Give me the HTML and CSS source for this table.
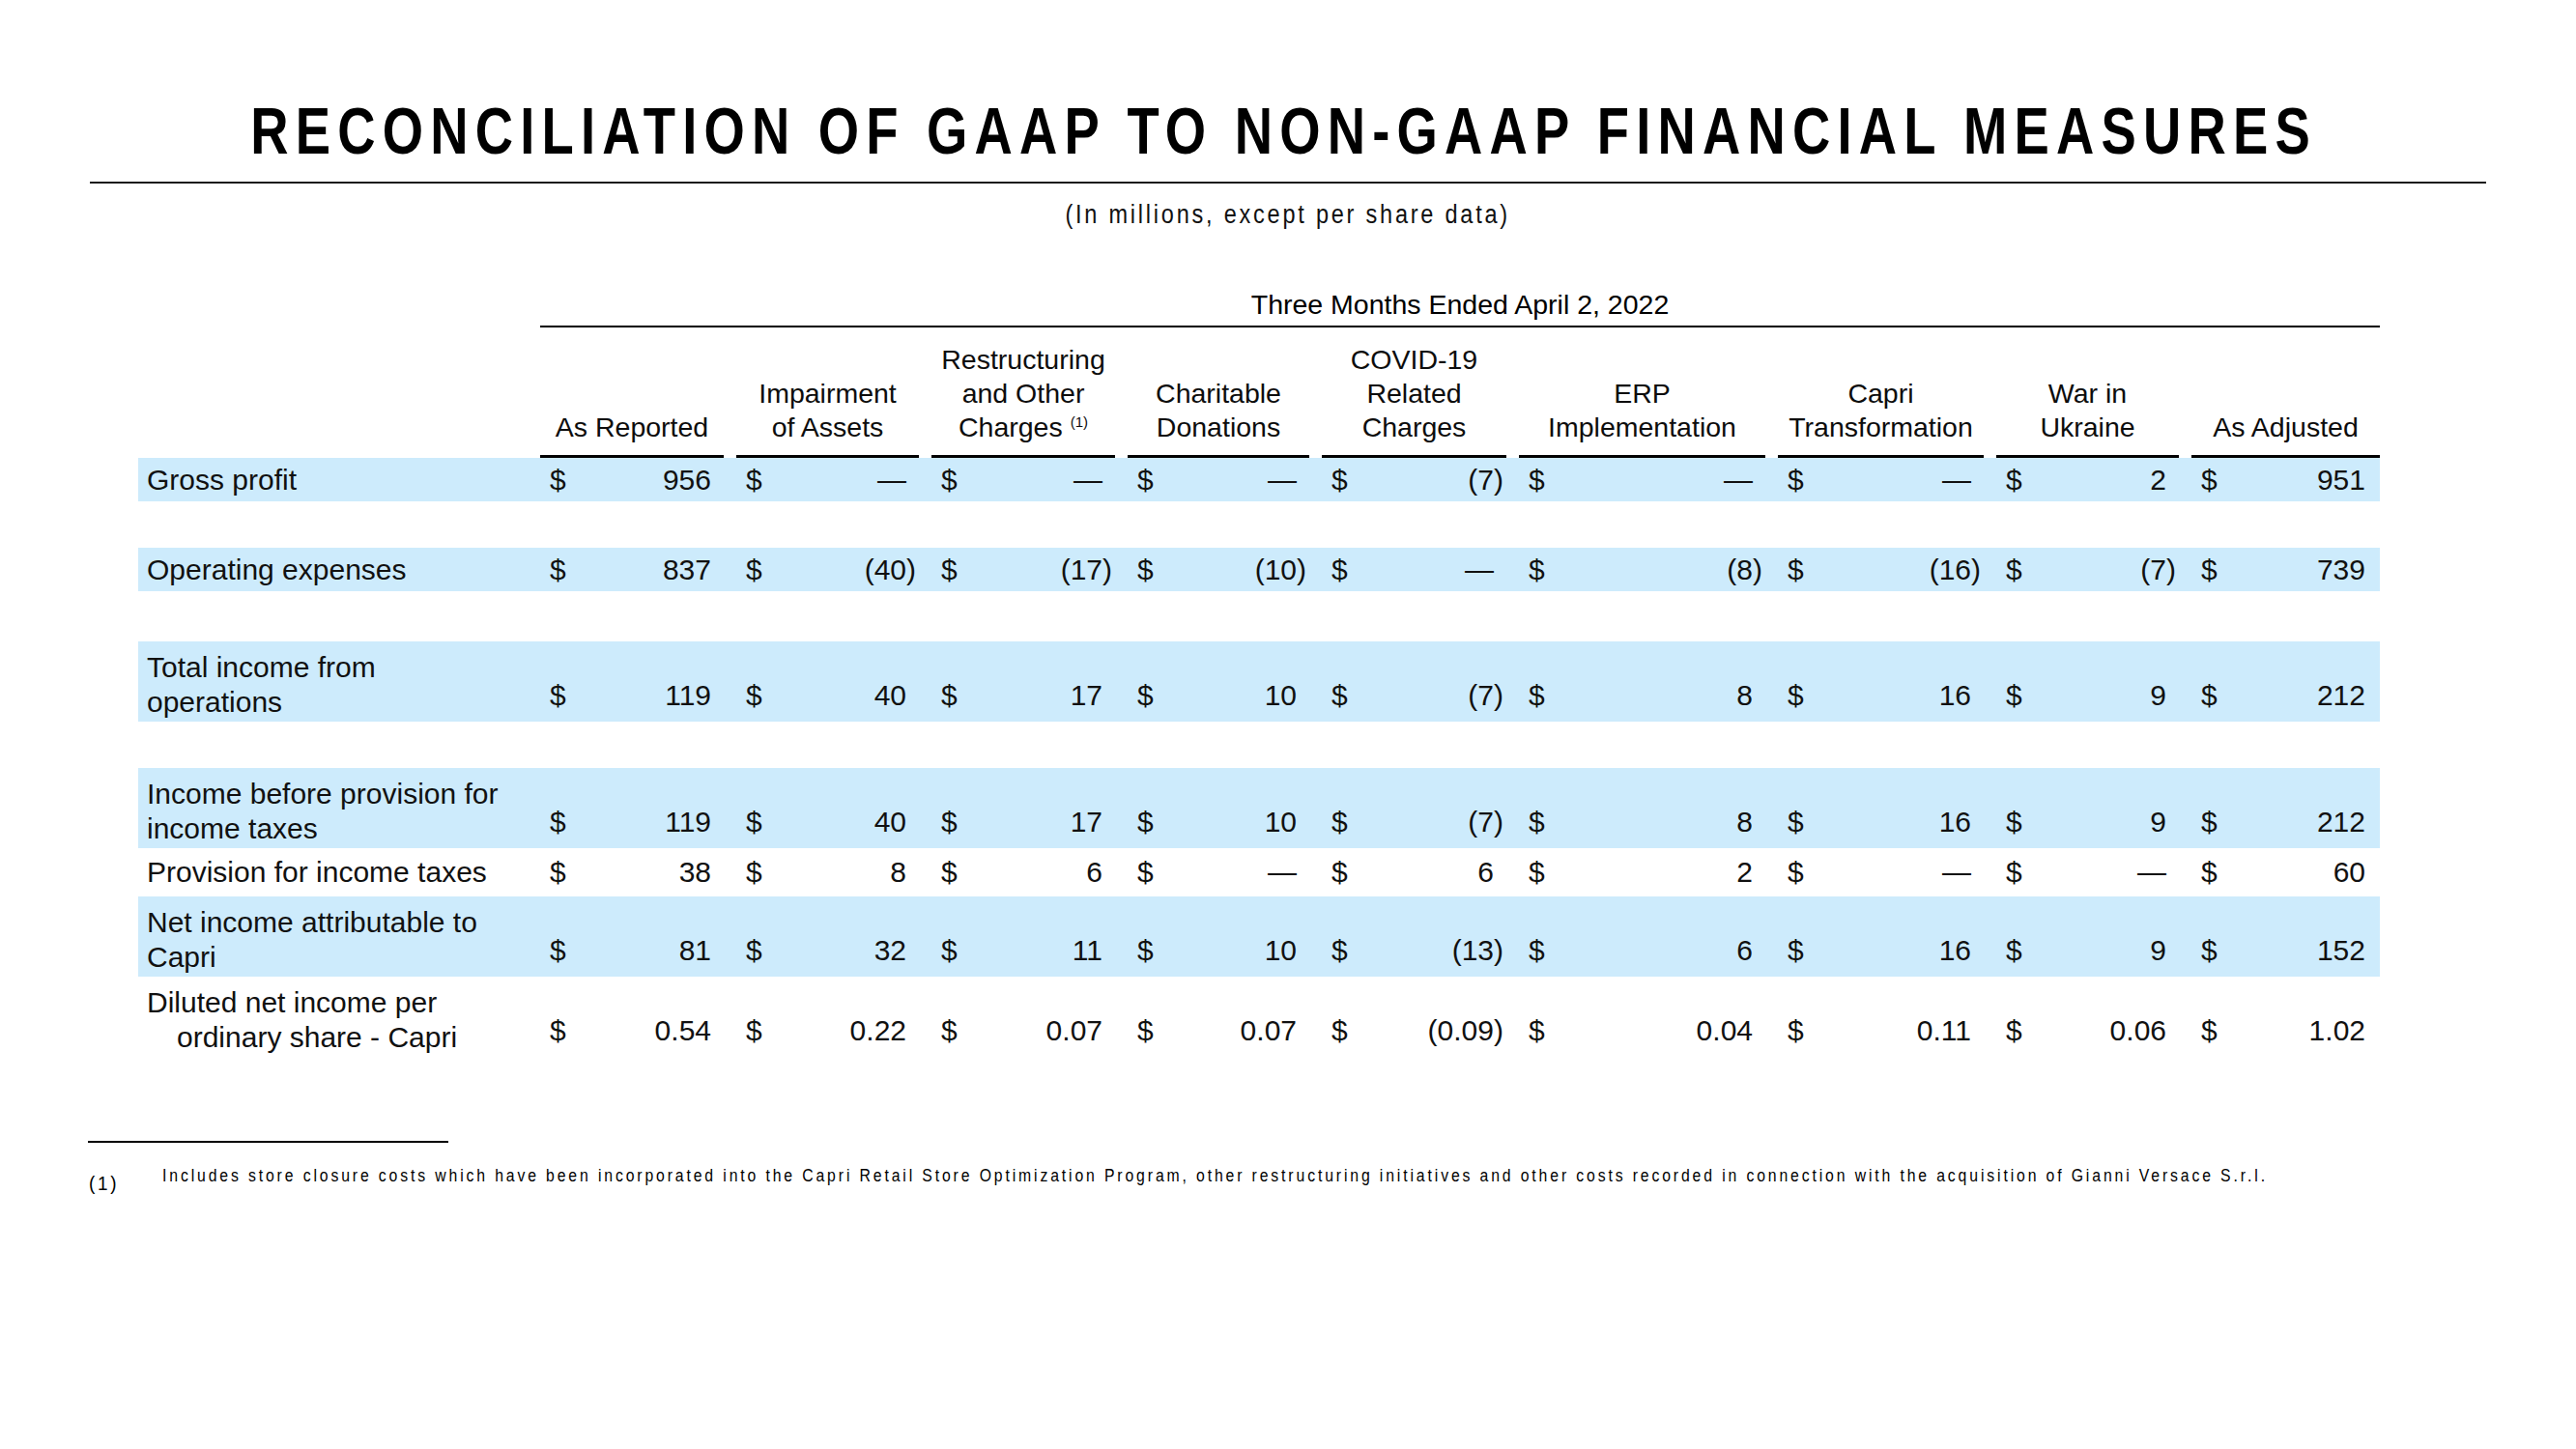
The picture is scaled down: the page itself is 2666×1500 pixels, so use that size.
FILE: index.html
```html
<!DOCTYPE html>
<html lang="en">
<head>
<meta charset="utf-8">
<title>Reconciliation of GAAP to Non-GAAP Financial Measures</title>
<link rel="stylesheet" href="styles.css">
</head>
<body>
<main class="slide">
  <h1 class="title"><span class="condensed title-text">RECONCILIATION OF GAAP TO NON-GAAP FINANCIAL MEASURES</span></h1>
  <hr class="title-rule">
  <p class="subtitle"><span class="condensed subtitle-text">(In millions, except per share data)</span></p>

  <section class="table">
    <div class="row period-row">
      <div></div>
      <div class="period">Three Months Ended April 2, 2022</div>
    </div>
    <div class="row head-row">
      <div></div>
      <div class="head">As Reported</div>
      <div class="head">Impairment<br>of Assets</div>
      <div class="head">Restructuring<br>and Other<br>Charges <sup class="sup">(1)</sup></div>
      <div class="head">Charitable<br>Donations</div>
      <div class="head">COVID-19<br>Related<br>Charges</div>
      <div class="head">ERP<br>Implementation</div>
      <div class="head">Capri<br>Transformation</div>
      <div class="head">War in<br>Ukraine</div>
      <div class="head">As Adjusted</div>
    </div>

    <div class="row band single gross">
      <div class="label">Gross profit</div>
      <div class="val"><span>$</span><span class="num">956</span></div>
      <div class="val"><span>$</span><span class="num">—</span></div>
      <div class="val"><span>$</span><span class="num">—</span></div>
      <div class="val"><span>$</span><span class="num">—</span></div>
      <div class="val"><span>$</span><span class="num">(7<span class="cp">)</span></span></div>
      <div class="val"><span>$</span><span class="num">—</span></div>
      <div class="val"><span>$</span><span class="num">—</span></div>
      <div class="val"><span>$</span><span class="num">2</span></div>
      <div class="val last"><span>$</span><span class="num">951</span></div>
    </div>

    <div class="row band single opex">
      <div class="label">Operating expenses</div>
      <div class="val"><span>$</span><span class="num">837</span></div>
      <div class="val"><span>$</span><span class="num">(40<span class="cp">)</span></span></div>
      <div class="val"><span>$</span><span class="num">(17<span class="cp">)</span></span></div>
      <div class="val"><span>$</span><span class="num">(10<span class="cp">)</span></span></div>
      <div class="val"><span>$</span><span class="num">—</span></div>
      <div class="val"><span>$</span><span class="num">(8<span class="cp">)</span></span></div>
      <div class="val"><span>$</span><span class="num">(16<span class="cp">)</span></span></div>
      <div class="val"><span>$</span><span class="num">(7<span class="cp">)</span></span></div>
      <div class="val last"><span>$</span><span class="num">739</span></div>
    </div>

    <div class="row band double opinc">
      <div class="label">Total income from<br>operations</div>
      <div class="val"><span>$</span><span class="num">119</span></div>
      <div class="val"><span>$</span><span class="num">40</span></div>
      <div class="val"><span>$</span><span class="num">17</span></div>
      <div class="val"><span>$</span><span class="num">10</span></div>
      <div class="val"><span>$</span><span class="num">(7<span class="cp">)</span></span></div>
      <div class="val"><span>$</span><span class="num">8</span></div>
      <div class="val"><span>$</span><span class="num">16</span></div>
      <div class="val"><span>$</span><span class="num">9</span></div>
      <div class="val last"><span>$</span><span class="num">212</span></div>
    </div>

    <div class="row band double pretax">
      <div class="label">Income before provision for<br>income taxes</div>
      <div class="val"><span>$</span><span class="num">119</span></div>
      <div class="val"><span>$</span><span class="num">40</span></div>
      <div class="val"><span>$</span><span class="num">17</span></div>
      <div class="val"><span>$</span><span class="num">10</span></div>
      <div class="val"><span>$</span><span class="num">(7<span class="cp">)</span></span></div>
      <div class="val"><span>$</span><span class="num">8</span></div>
      <div class="val"><span>$</span><span class="num">16</span></div>
      <div class="val"><span>$</span><span class="num">9</span></div>
      <div class="val last"><span>$</span><span class="num">212</span></div>
    </div>

    <div class="row single tax">
      <div class="label">Provision for income taxes</div>
      <div class="val"><span>$</span><span class="num">38</span></div>
      <div class="val"><span>$</span><span class="num">8</span></div>
      <div class="val"><span>$</span><span class="num">6</span></div>
      <div class="val"><span>$</span><span class="num">—</span></div>
      <div class="val"><span>$</span><span class="num">6</span></div>
      <div class="val"><span>$</span><span class="num">2</span></div>
      <div class="val"><span>$</span><span class="num">—</span></div>
      <div class="val"><span>$</span><span class="num">—</span></div>
      <div class="val last"><span>$</span><span class="num">60</span></div>
    </div>

    <div class="row band double">
      <div class="label">Net income attributable to<br>Capri</div>
      <div class="val"><span>$</span><span class="num">81</span></div>
      <div class="val"><span>$</span><span class="num">32</span></div>
      <div class="val"><span>$</span><span class="num">11</span></div>
      <div class="val"><span>$</span><span class="num">10</span></div>
      <div class="val"><span>$</span><span class="num">(13<span class="cp">)</span></span></div>
      <div class="val"><span>$</span><span class="num">6</span></div>
      <div class="val"><span>$</span><span class="num">16</span></div>
      <div class="val"><span>$</span><span class="num">9</span></div>
      <div class="val last"><span>$</span><span class="num">152</span></div>
    </div>

    <div class="row double">
      <div class="label">Diluted net income per<br><span class="indent">ordinary share - Capri</span></div>
      <div class="val"><span>$</span><span class="num">0.54</span></div>
      <div class="val"><span>$</span><span class="num">0.22</span></div>
      <div class="val"><span>$</span><span class="num">0.07</span></div>
      <div class="val"><span>$</span><span class="num">0.07</span></div>
      <div class="val"><span>$</span><span class="num">(0.09<span class="cp">)</span></span></div>
      <div class="val"><span>$</span><span class="num">0.04</span></div>
      <div class="val"><span>$</span><span class="num">0.11</span></div>
      <div class="val"><span>$</span><span class="num">0.06</span></div>
      <div class="val last"><span>$</span><span class="num">1.02</span></div>
    </div>
  </section>

  <hr class="fn-rule">
  <div class="footnote">
    <span class="fn-mark">(1)</span>
    <p class="fn-text"><span class="condensed fn-body">Includes store closure costs which have been incorporated into the Capri Retail Store Optimization Program, other restructuring initiatives and other costs recorded in connection with the acquisition of Gianni Versace S.r.l.</span></p>
  </div>
</main>
</body>
</html>
```

FILE: styles.css
```css
* {
  box-sizing: border-box;
  margin: 0;
  padding: 0;
}

html,
body {
  background: #ffffff;
}

body {
  width: 2666px;
  height: 1500px;
  overflow: hidden;
  font-family: "Liberation Sans", Arial, sans-serif;
  color: #000000;
}

.slide {
  padding-top: 101px;
}

/* horizontally condensed text (Arial Narrow look) */
.condensed {
  display: inline-block;
  white-space: nowrap;
  transform-origin: center center;
}

.title {
  display: flex;
  justify-content: center;
  padding-right: 8px;
  font-weight: 700;
  font-size: 68px;
  line-height: 68px;
  letter-spacing: 9px;
}

.title-text {
  transform: scaleX(0.8);
}

.title-rule {
  border: 0;
  height: 2px;
  background: #1a1a1a;
  margin: 19px 93px 0 93px;
}

.subtitle {
  display: flex;
  justify-content: center;
  margin-top: 16px;
  font-size: 27px;
  line-height: 32px;
  letter-spacing: 3.2px;
  color: #111111;
}

.subtitle-text {
  transform: scaleX(0.87);
}

/* ---------- table ---------- */
.table {
  margin-top: 60px;
  margin-left: 143px;
  width: 2320px;
}

.row {
  display: grid;
  grid-template-columns: 403px 190px 189px 190px 188px 191px 255px 213px 189px 195px;
  column-gap: 13px;
}

.period-row .period {
  grid-column: 2 / -1;
  text-align: center;
  font-size: 28.5px;
  line-height: 35px;
  padding-bottom: 4px;
  border-bottom: 2px solid #000;
}

.head-row {
  align-items: end;
  padding-top: 16px;
}

.head {
  text-align: center;
  font-size: 28.5px;
  line-height: 35px;
  padding-bottom: 11px;
  border-bottom: 3px solid #000;
  color: #0d0d0d;
}

.sup {
  font-size: 15px;
  line-height: 0;
  vertical-align: 10px;
}

.band {
  background: #cdebfc;
}

.label {
  font-size: 30px;
  line-height: 36px;
  padding-left: 9px;
  color: #111111;
}

.val {
  display: flex;
  justify-content: space-between;
  font-size: 30px;
  line-height: 36px;
  padding: 0 13px 0 10px;
  color: #111111;
}

.val.last {
  padding-right: 15px;
}

.cp {
  margin-right: -10px;
}

.single {
  height: 45px;
  align-items: center;
}

.tax {
  height: 50px;
}

.double {
  height: 83px;
}

.double .label {
  align-self: start;
  padding-top: 9px;
}

.double .val {
  align-self: end;
  padding-bottom: 9px;
}

.indent {
  padding-left: 31px;
}

.opex {
  margin-top: 48px;
}

.opinc {
  margin-top: 52px;
}

.pretax {
  margin-top: 48px;
}

/* ---------- footnote ---------- */
.fn-rule {
  border: 0;
  height: 2px;
  width: 373px;
  background: #000;
  margin: 87px 0 0 91px;
}

.footnote {
  display: flex;
  align-items: flex-start;
  padding-left: 92px;
  margin-top: 24px;
}

.fn-mark {
  width: 76px;
  flex: none;
  padding-top: 6px;
  font-size: 21px;
  line-height: 24px;
  letter-spacing: 3px;
  transform: scaleX(0.9);
  transform-origin: left center;
}

.fn-text {
  font-size: 17.5px;
  line-height: 21px;
  letter-spacing: 3.2px;
  white-space: nowrap;
}

.fn-body {
  transform: scaleX(0.9);
  transform-origin: left center;
}
```
